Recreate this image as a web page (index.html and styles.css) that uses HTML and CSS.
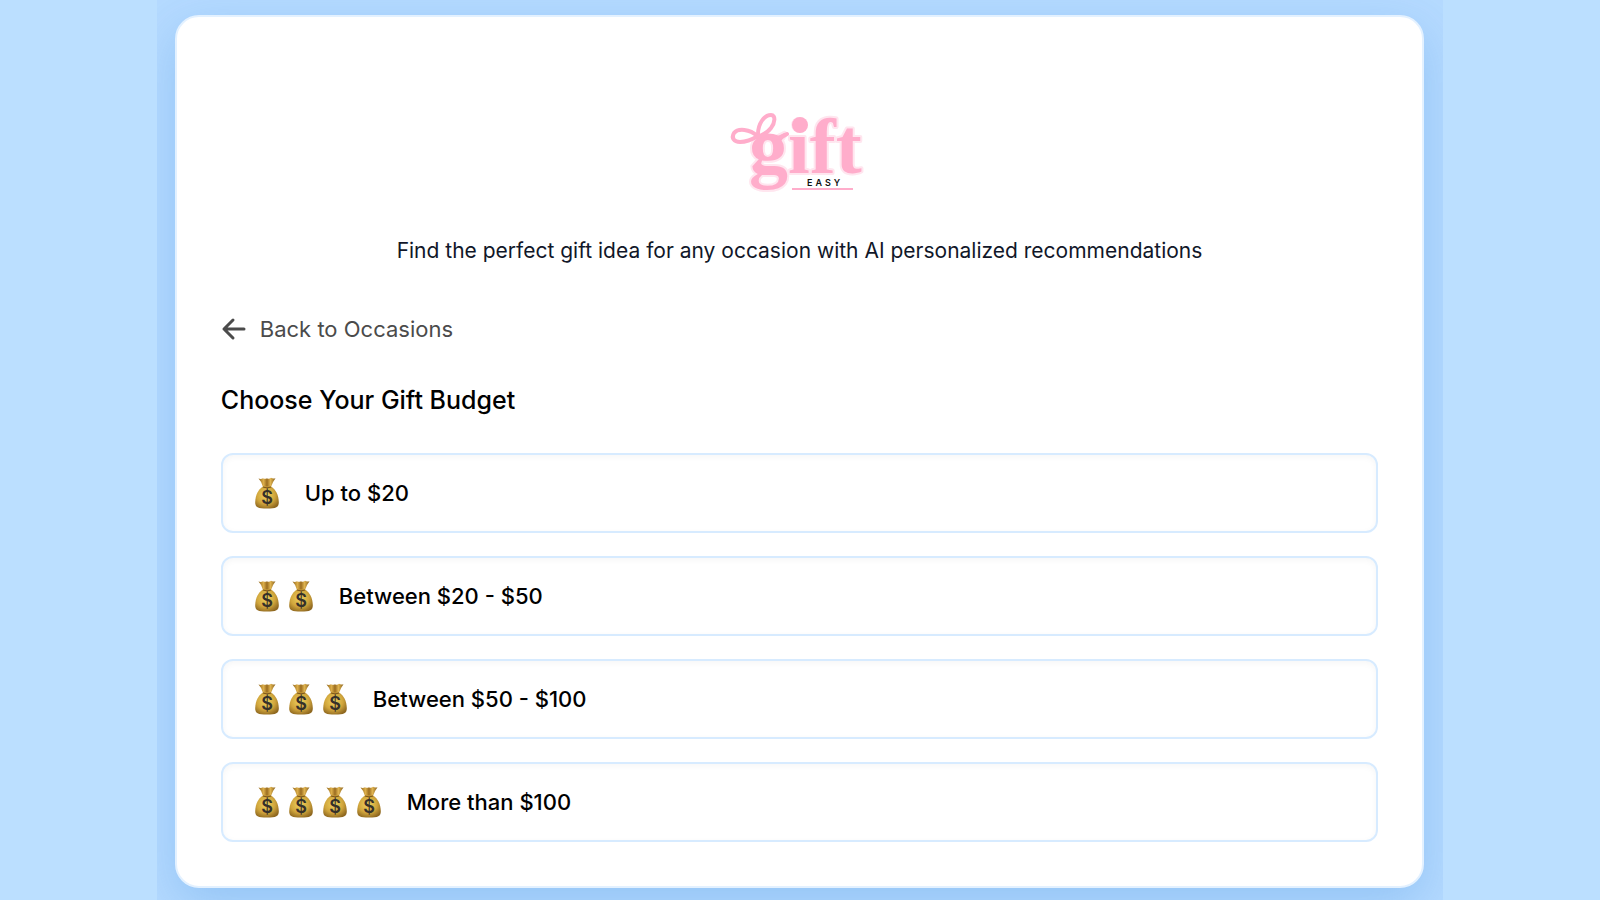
FILE: index.html
```html
<!DOCTYPE html>
<html lang="en">
<head>
    <meta charset="UTF-8">
    <meta name="viewport" content="width=device-width, initial-scale=1.0">
    <title>Gift Easy</title>
    <link rel="stylesheet" href="styles.css">
</head>
<body>
    <!-- money bag, reused by every budget option -->
    <svg class="sprite" width="0" height="0" aria-hidden="true">
        <defs>
            <radialGradient id="gold" cx="45%" cy="40%" r="65%">
                <stop offset="0" stop-color="#f0d25e"/>
                <stop offset="0.6" stop-color="#d0a53c"/>
                <stop offset="1" stop-color="#8f6820"/>
            </radialGradient>
            <linearGradient id="neck">
                <stop offset="0" stop-color="#94691f"/>
                <stop offset="0.3" stop-color="#dcae4a"/>
                <stop offset="0.5" stop-color="#9a6c20"/>
                <stop offset="0.7" stop-color="#e0b450"/>
                <stop offset="1" stop-color="#8a611c"/>
            </linearGradient>
        </defs>
        <symbol id="bag" viewBox="0 0 24 32">
            <path d="M3.500 1.500 Q6 2.500 8 1.200 Q10 2.400 12 1.200 Q14 2.400 16 .8 Q18 2.200 20.500 1.200 Q17.500 5 16 10 H8 Q7 5 3.500 1.500Z" fill="url(#neck)"/>
            <path d="M8 9.500 H16 C21 12.500 23.500 18 23.800 25 C24 30.500 21 31.500 12 31.500 C3 31.500 0 30.500 .2 25 C.5 18 3 12.500 8 9.500Z" fill="url(#gold)"/>
            <path d="M8 10 Q12 11.500 16 10" fill="none" stroke="#7d561b" stroke-width="1.2"/>
            <text x="12" y="27" class="bag-sign">$</text>
        </symbol>
    </svg>

    <main class="page">
        <section class="card">
            <svg class="logo" viewBox="0 0 200 120" role="img" aria-label="Gift Easy">
                <text x="50" y="82" class="logo-word">gift</text>
                <circle cx="101" cy="34" r="8" class="logo-dot"/>
                <g class="logo-bow">
                    <path d="M59 43 C59 33 65 24 72 24 C77 24 76 32 72 37 C69 41 64 44 58 46"/>
                    <path d="M58 45 C51 38 39 37 35 42 C32 47 35 51 41 51 C48 51 54 48 59 45"/>
                    <path d="M58 46 C65 43 73 44 81 47 L88 43"/>
                </g>
                <text x="108" y="95" class="logo-sub">EASY</text>
                <path d="M93 98H154" class="logo-line"/>
            </svg>

            <p class="tagline">Find the perfect gift idea for any occasion with AI personalized recommendations</p>

            <a class="back" href="#">
                <svg class="arrow" viewBox="0 0 24 24" aria-hidden="true">
                    <path d="M22 12H2M11 3L2 12L11 21"/>
                </svg>
                Back to Occasions
            </a>

            <h1>Choose Your Gift Budget</h1>

            <div class="options">
                <button class="option" type="button">
                    <span class="bags"><svg><use href="#bag"/></svg></span>
                    Up to $20
                </button>
                <button class="option" type="button">
                    <span class="bags"><svg><use href="#bag"/></svg><svg><use href="#bag"/></svg></span>
                    Between $20 - $50
                </button>
                <button class="option" type="button">
                    <span class="bags"><svg><use href="#bag"/></svg><svg><use href="#bag"/></svg><svg><use href="#bag"/></svg></span>
                    Between $50 - $100
                </button>
                <button class="option" type="button">
                    <span class="bags"><svg><use href="#bag"/></svg><svg><use href="#bag"/></svg><svg><use href="#bag"/></svg><svg><use href="#bag"/></svg></span>
                    More than $100
                </button>
            </div>
        </section>
    </main>
</body>
</html>
```
FILE: styles.css
```css
* {
    box-sizing: border-box;
}
body {
    margin: 0;
    background-color: #bbdfff;
    color: #000;
    font-family: Inter, "Liberation Sans", sans-serif;
}
.sprite {
    position: absolute;
}
.page {
    width: 80.4%;
    min-height: 100vh;
    margin: 0 auto;
    padding: 15px 19px 13px 18px;
    background-color: #b5daff;
    overflow: hidden;
}
.card {
    display: flex;
    flex-direction: column;
    padding: 74px 44px 44px;
    border: 2px solid #e3f1ff;
    border-radius: 24px;
    background-color: #fff;
    box-shadow: 0 16px 48px rgba(60, 140, 220, 0.28);
}
.logo {
    width: 200px;
    height: 120px;
    align-self: center;
}
.logo-word {
    font-family: "Liberation Serif", serif;
    font-size: 78px;
    font-weight: bold;
    fill: #ffadcb;
    stroke: #ffe6ef;
    stroke-width: 4;
    stroke-linejoin: round;
    paint-order: stroke;
}
.logo-bow {
    fill: none;
    stroke: #ffadcb;
    stroke-width: 4;
    stroke-linecap: round;
}
.logo-dot {
    fill: #ffadcb;
}
.logo-sub {
    font-family: Inter, sans-serif;
    font-size: 9px;
    font-weight: 600;
    letter-spacing: 3px;
    fill: #111;
}
.logo-line {
    stroke: #ffadcb;
    stroke-width: 2;
}
.tagline {
    margin: 22px 0 0;
    font-size: 21px;
    line-height: 36px;
    text-align: center;
    color: #111729;
}
.back {
    display: flex;
    align-items: center;
    align-self: flex-start;
    gap: 13px;
    margin-top: 42px;
    font-size: 22px;
    line-height: 36px;
    color: #4b4b4b;
    text-decoration: none;
}
.arrow {
    width: 26px;
    height: 24px;
    fill: none;
    stroke: #4b4b4b;
    stroke-width: 3;
    stroke-linecap: round;
    stroke-linejoin: round;
}
h1 {
    margin: 32px 0;
    font-size: 25px;
    font-weight: 500;
    line-height: 42px;
}
.options {
    display: flex;
    flex-direction: column;
    gap: 23px;
}
.option {
    display: flex;
    align-items: center;
    gap: 26px;
    width: 100%;
    height: 80px;
    padding: 0 32px;
    border: 2px solid #d7ebff;
    border-radius: 12px;
    background-color: #fff;
    box-shadow: inset 0 2px 6px rgba(0, 0, 0, 0.04);
    font-family: inherit;
    font-size: 22px;
    font-weight: 500;
    color: #000;
    text-align: left;
    cursor: pointer;
}
.option:hover {
    background-color: #f5faff;
}
.bags {
    display: flex;
    gap: 10px;
}
.bags svg {
    width: 24px;
    height: 32px;
}
.bag-sign {
    font-family: Inter, sans-serif;
    font-size: 18px;
    font-weight: 600;
    text-anchor: middle;
    fill: #35302a;
}
```
